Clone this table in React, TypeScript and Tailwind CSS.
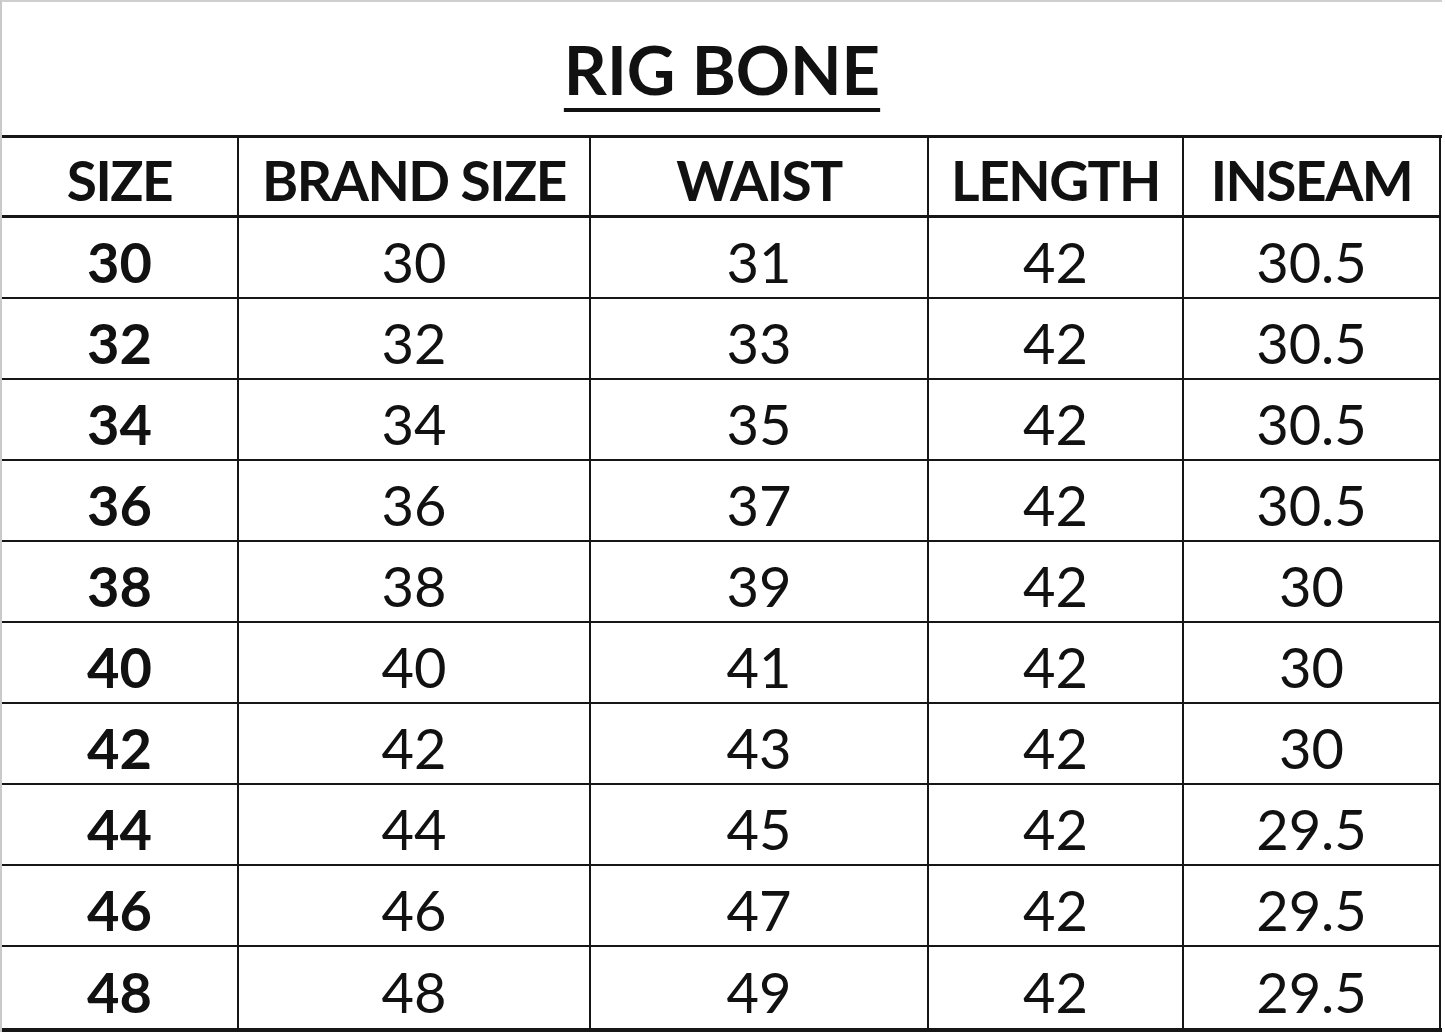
const headers = ["SIZE", "BRAND SIZE", "WAIST", "LENGTH", "INSEAM"];

const rows = [
  ["30", "30", "31", "42", "30.5"],
  ["32", "32", "33", "42", "30.5"],
  ["34", "34", "35", "42", "30.5"],
  ["36", "36", "37", "42", "30.5"],
  ["38", "38", "39", "42", "30"],
  ["40", "40", "41", "42", "30"],
  ["42", "42", "43", "42", "30"],
  ["44", "44", "45", "42", "29.5"],
  ["46", "46", "47", "42", "29.5"],
  ["48", "48", "49", "42", "29.5"],
];

export default function App() {
  return (
    <div
      className="w-[1445px] h-[1032px] bg-white text-[#111] overflow-hidden"
      style={{ fontFamily: "Lato, 'Open Sans', sans-serif" }}
    >
      <div className="w-[1442px] h-[1032px] border-l-2 border-t-2 border-l-[#c9c9c9] border-t-[#cfcfcf] flex flex-col">
        <div className="h-[133px] shrink-0 flex items-start justify-center pt-[27px]">
          <h1 className="text-[67px] font-bold leading-[80px] underline decoration-[4px] underline-offset-[13px]">
            RIG BONE
          </h1>
        </div>
        <div className="grid grid-cols-[237px_352px_338px_255px_257px] border-t-[3px] border-b-[4px] border-[#161616]">
          {headers.map((h) => (
            <div
              key={h}
              className="h-[80px] flex items-center justify-center pt-[8px] border-r-2 border-b-[3px] border-[#161616] text-[55px] font-bold tracking-[-1.5px]"
            >
              {h}
            </div>
          ))}
          {rows.map((r, i) =>
            r.map((c, j) => (
              <div
                key={i + "-" + j}
                className={
                  "h-[81px] flex items-center justify-center pt-[8px] border-r-2 border-[#161616] text-[56px] " +
                  (i < rows.length - 1 ? "border-b-2 " : "") +
                  (j === 0 ? "font-bold" : "font-normal")
                }
              >
                {c}
              </div>
            ))
          )}
        </div>
      </div>
    </div>
  );
}
